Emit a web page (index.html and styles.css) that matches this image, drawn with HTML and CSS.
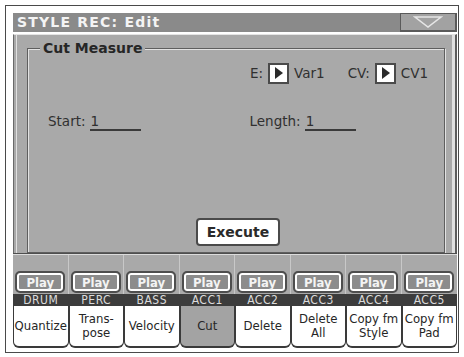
FILE: index.html
```html
<!DOCTYPE html>
<html lang="en">
<head>
  <meta charset="UTF-8">
  <title>STYLE REC: Edit</title>
  <link rel="stylesheet" href="styles.css">
</head>
<body>
  <div class="screen">
    <div class="title-bar">
      <span class="title">STYLE REC: Edit</span>
      <div class="menu-btn">
        <svg width="30" height="12" viewBox="0 0 30 12">
          <path d="M2 1 L28 1 L15 11 Z" fill="none" stroke="#e6e6e6" stroke-width="1.5"/>
        </svg>
      </div>
    </div>

    <div class="panel">
      <div class="group">
        <div class="group-title">Cut Measure</div>

        <div class="row row-top">
          <div class="field">
            <span>E:</span>
            <span class="play-box"></span>
            <span>Var1</span>
          </div>
          <div class="field field-cv">
            <span>CV:</span>
            <span class="play-box"></span>
            <span>CV1</span>
          </div>
        </div>

        <div class="row row-values">
          <div class="value-field">
            <span>Start:</span>
            <span class="value">1</span>
          </div>
          <div class="value-field">
            <span>Length:</span>
            <span class="value">1</span>
          </div>
        </div>

        <div class="execute-wrap">
          <button class="execute">Execute</button>
        </div>
      </div>
    </div>

    <div class="tracks">
      <div class="play-row">
        <div class="cell"><button class="play">Play</button></div>
        <div class="cell"><button class="play">Play</button></div>
        <div class="cell"><button class="play">Play</button></div>
        <div class="cell"><button class="play">Play</button></div>
        <div class="cell"><button class="play">Play</button></div>
        <div class="cell"><button class="play">Play</button></div>
        <div class="cell"><button class="play">Play</button></div>
        <div class="cell"><button class="play">Play</button></div>
      </div>
      <div class="names">
        <span>DRUM</span>
        <span>PERC</span>
        <span>BASS</span>
        <span>ACC1</span>
        <span>ACC2</span>
        <span>ACC3</span>
        <span>ACC4</span>
        <span>ACC5</span>
      </div>
      <div class="tabs">
        <div class="tab">Quantize</div>
        <div class="tab">Trans-<br>pose</div>
        <div class="tab">Velocity</div>
        <div class="tab selected">Cut</div>
        <div class="tab">Delete</div>
        <div class="tab">Delete<br>All</div>
        <div class="tab">Copy fm<br>Style</div>
        <div class="tab">Copy fm<br>Pad</div>
      </div>
    </div>
  </div>
</body>
</html>
```

FILE: styles.css
```css
body {
  margin: 0;
  background: #fff;
  font-family: "DejaVu Sans", sans-serif;
  color: #2a2a2a;
}
.screen {
  margin: 5px 0 0 5px;
  width: 444px;
  height: 339px;
  border: 1px solid #4a4a4a;
  padding: 7px 1px 0 7px;
}
.title-bar {
  display: flex;
  justify-content: space-between;
  height: 19px;
  background: #8a8a8a;
}
.title {
  color: #f4f4f4;
  font-weight: bold;
  font-size: 14px;
  line-height: 19px;
  padding-left: 4px;
  letter-spacing: 1.2px;
}
.menu-btn {
  width: 57px;
  height: 19px;
  background: #a2a2a2;
  border: 1px solid #5a5a5a;
  border-right-width: 2px;
  border-bottom-width: 2px;
  display: flex;
  align-items: center;
  justify-content: center;
  box-sizing: border-box;
}
.panel {
  margin-top: 2px;
  background: #a9a9a9;
  border-top: 1px solid #e4e4e4;
  border-left: 1px solid #6a6a6a;
  border-right: 2px solid #5c5c5c;
  box-shadow: inset 2px 0 0 #a9a9a9, inset 3px 0 0 #e0e0e0, inset -3px 0 0 #e0e0e0;
  padding: 13px 10px 0 13px;
  box-sizing: border-box;
  height: 219px;
}
.group {
  height: 205px;
  border: 1px solid #5e5e5e;
  box-shadow: 1px 1px 0 #e2e2e2, inset 1px 1px 0 #e2e2e2;
  box-sizing: border-box;
  display: flex;
  flex-direction: column;
}
.group-title {
  align-self: flex-start;
  margin: -9px 0 0 12px;
  padding: 0 3px;
  background: #a9a9a9;
  font-weight: bold;
  font-size: 14px;
  line-height: 17px;
  color: #262626;
}
.row {
  display: flex;
  font-size: 13.5px;
  color: #303030;
}
.row-top {
  margin-top: 5px;
  padding-left: 222px;
  gap: 23px;
}
.field {
  display: flex;
  align-items: center;
  gap: 5px;
  height: 22px;
}
.field-cv {
  gap: 5px;
}
.play-box {
  width: 17px;
  height: 17px;
  background: #fff;
  border: 2px solid #4a4a4a;
  position: relative;
}
.play-box::after {
  content: "";
  position: absolute;
  left: 5px;
  top: 2px;
  border-left: 8px solid #2a2a2a;
  border-top: 6.5px solid transparent;
  border-bottom: 6.5px solid transparent;
}
.row-values {
  margin-top: 29px;
  padding-left: 20px;
  gap: 109px;
}
.value-field {
  display: flex;
  gap: 4px;
  align-items: baseline;
}
.value {
  width: 50px;
  border-bottom: 2px solid #3a3a3a;
  line-height: 16px;
  padding-left: 1px;
}
.execute-wrap {
  margin-top: auto;
  margin-bottom: 6px;
  display: flex;
  justify-content: center;
}
.execute {
  width: 84px;
  height: 28px;
  background: #fff;
  border: 2px solid #4a4a4a;
  border-radius: 4px;
  font-family: inherit;
  font-weight: bold;
  font-size: 14px;
  color: #2a2a2a;
  margin-left: 4px;
  padding: 0;
}
.tracks {
  border-top: 1px solid #4e4e4e;
}
.play-row {
  display: grid;
  grid-template-columns: repeat(8, 1fr);
  height: 39px;
  background: #a9a9a9;
  border-top: 1px solid #dcdcdc;
}
.cell {
  display: flex;
  align-items: flex-end;
  justify-content: center;
  border-right: 1px solid #c8c8c8;
  padding-bottom: 1px;
}
.cell:last-child {
  border-right: none;
}
.play {
  width: 50px;
  height: 22px;
  border: 2px solid #4e4e4e;
  border-radius: 5px;
  background: #8c8c8c;
  box-shadow: inset 0 0 0 2px #fff;
  color: #f4f4f4;
  font-family: "DejaVu Sans Condensed", "DejaVu Sans", sans-serif;
  font-weight: bold;
  font-size: 13px;
  padding: 0;
}
.names {
  display: grid;
  grid-template-columns: repeat(8, 1fr);
  background: #3c3c3c;
  color: #dcdcdc;
  font-family: "DejaVu Sans Condensed", "DejaVu Sans", sans-serif;
  font-size: 12px;
  line-height: 12px;
  text-align: center;
  letter-spacing: 0.5px;
}
.tabs {
  display: grid;
  grid-template-columns: repeat(8, 1fr);
  height: 42px;
}
.tab {
  background: #fff;
  border: 1px solid #3a3a3a;
  border-top: none;
  border-bottom-width: 2px;
  border-radius: 0 0 6px 6px;
  display: flex;
  align-items: center;
  justify-content: center;
  text-align: center;
  font-family: "DejaVu Sans Condensed", "DejaVu Sans", sans-serif;
  font-size: 13px;
  line-height: 14px;
  color: #262626;
}
.tab.selected {
  background: #a3a3a3;
}
```
